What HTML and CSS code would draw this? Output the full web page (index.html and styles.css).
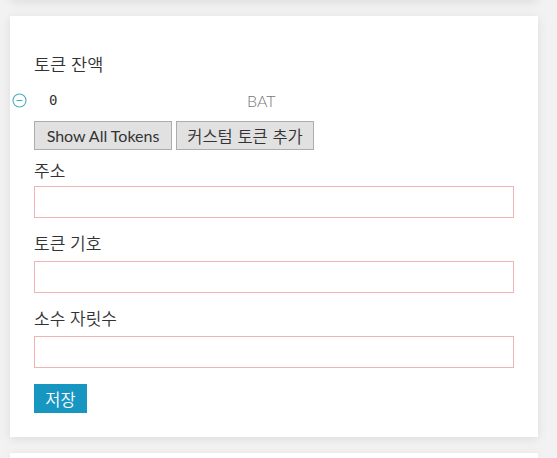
FILE: index.html
```html
<!DOCTYPE html>
<html lang="ko">
<head>
<meta charset="utf-8">
<link rel="stylesheet" href="styles.css">
</head>
<body>
<div class="page">
  <div class="card card-prev"></div>
  <div class="card card-main">
    <h3 class="title">토큰 잔액</h3>
    <div class="token-row">
      <span class="remove-icon">
        <svg width="15" height="15" viewBox="0 0 15 15"><circle cx="7.5" cy="7.5" r="6.5" fill="none" stroke="#4aaebd" stroke-width="1.1"/><line x1="4.5" y1="7.5" x2="10.5" y2="7.5" stroke="#4aaebd" stroke-width="1.1"/></svg>
      </span>
      <span class="amount">0</span>
      <span class="symbol">BAT</span>
    </div>
    <div class="btn-row">
      <button class="btn">Show All Tokens</button>
      <button class="btn btn-ko">커스텀 토큰 추가</button>
    </div>
    <label class="field-label first">주소</label>
    <input class="field" type="text">
    <label class="field-label">토큰 기호</label>
    <input class="field" type="text">
    <label class="field-label">소수 자릿수</label>
    <input class="field" type="text">
    <button class="save">저장</button>
  </div>
  <div class="card card-next"></div>
</div>
</body>
</html>
```
FILE: styles.css
```css
html, body {
  margin: 0;
  padding: 0;
  background: #f2f2f2;
  overflow: hidden;
  height: 458px;
}
.page {
  display: flex;
  flex-direction: column;
  gap: 16px;
  padding: 0 19px 0 10px;
  margin-top: -100px;
}
.card {
  background: #fff;
  box-shadow: 0 2px 10px rgba(0,0,0,0.09);
}
.card-prev { height: 100px; }
.card-next { height: 5px; }
.card-main {
  padding: 35px 24px 24px 24px;
  display: flex;
  flex-direction: column;
  align-items: flex-start;
  font-family: "Noto Sans CJK KR", sans-serif;
  font-weight: 350;
  color: #333;
}
.title {
  margin: 0;
  font-weight: 350;
  font-size: 17.5px;
  line-height: 26px;
  height: 26px;
}
.token-row {
  display: flex;
  align-items: center;
  height: 26px;
  margin-top: 10px;
  margin-left: -22px;
  width: 100%;
}
.remove-icon {
  display: flex;
  width: 15px;
  height: 15px;
}
.amount {
  font-family: "DejaVu Sans Mono", monospace;
  font-size: 14px;
  margin-left: 22px;
  width: 198px;
  color: #333;
}
.symbol {
  font-family: Lato, sans-serif;
  font-weight: 300;
  font-size: 16px;
  color: #777;
}
.btn-row {
  display: flex;
  gap: 4px;
  margin-top: 8px;
}
.btn {
  height: 29px;
  width: 138px;
  padding: 0;
  background: #e1e1e1;
  border: 1px solid #adadad;
  font-family: Lato, "Noto Sans CJK KR", sans-serif;
  font-weight: 400;
  font-size: 16px;
  color: #333;
}
.btn-ko {
  font-family: "Noto Sans CJK KR", sans-serif;
  font-weight: 350;
  font-size: 16.5px;
}
.field-label {
  font-size: 17px;
  line-height: 24px;
  margin-top: 13px;
  margin-bottom: 6px;
  color: #333;
}
.field-label.first {
  margin-top: 8px;
  margin-bottom: 4px;
}
.field {
  box-sizing: border-box;
  width: 100%;
  height: 32px;
  margin: 0;
  border: 1px solid #f0b4b4;
  background: #fff;
  outline: none;
}
.save {
  margin-top: 16px;
  height: 29px;
  width: 53px;
  padding: 0;
  background: #1896c2;
  border: none;
  color: #fff;
  font-family: "Noto Sans CJK KR", sans-serif;
  font-weight: 350;
  font-size: 16.5px;
}
```
